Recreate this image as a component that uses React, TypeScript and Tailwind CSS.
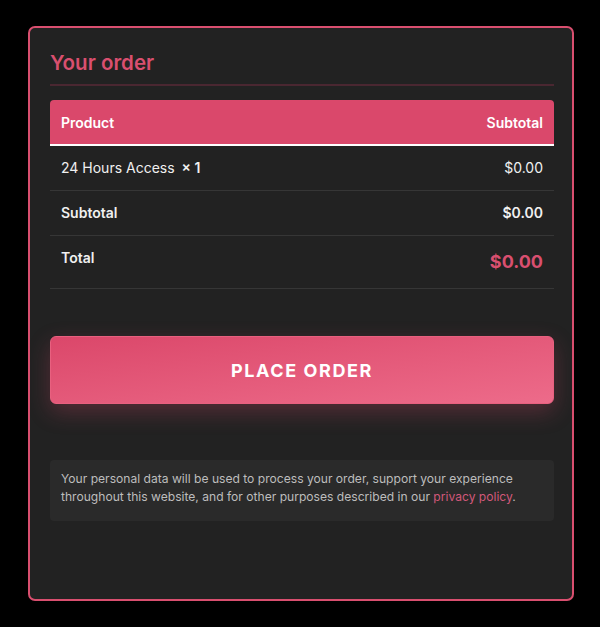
import React from "react";

const rows = [
  { label: "24 Hours Access", qty: "× 1", value: "$0.00" },
];

export default function App() {
  return (
    <div className="min-h-[627px] bg-black pt-[26px] pl-[28px] font-['Inter',sans-serif]">
      <div className="w-[546px] h-[575px] rounded-[7px] border-2 border-[#d94f6f] bg-[#222222] pl-5 pr-[18px] pt-5">
        {/* Titre */}
        <h3 className="text-[20.5px] leading-[29px] font-semibold text-[#d94f6f] pb-[7px] border-b-2 border-[#4a2731]">
          Your order
        </h3>

        {/* Bảng đơn hàng */}
        <div className="mt-[14px]">
          <div className="flex justify-between items-center h-[46px] px-[11px] rounded-t-[4px] bg-[#da486b] border-b-2 border-white text-[14px] font-semibold text-white">
            <span>Product</span>
            <span>Subtotal</span>
          </div>
          {rows.map((r) => (
            <div
              key={r.label}
              className="flex justify-between items-center py-3 px-[11px] border-b border-[#363636] text-[14px] leading-5 text-[#f0f0f0]"
            >
              <span>
                {r.label}
                <span className="font-semibold ml-[7px]">{r.qty}</span>
              </span>
              <span>{r.value}</span>
            </div>
          ))}
          <div className="flex justify-between items-center py-3 px-[11px] border-b border-[#363636] text-[14px] leading-5 font-semibold text-[#f0f0f0]">
            <span>Subtotal</span>
            <span>$0.00</span>
          </div>
          <div className="flex justify-between items-start py-3 px-[11px] border-b border-[#363636] text-[#f0f0f0]">
            <span className="text-[14px] leading-5 font-semibold">Total</span>
            <span className="text-[18px] leading-7 font-bold text-[#d94f6f]">$0.00</span>
          </div>
        </div>

        {/* Nút đặt hàng */}
        <button className="mt-[47px] w-full h-[68px] rounded-[6px] border border-[#e8607f] bg-gradient-to-br from-[#db476a] to-[#ed6b8a] text-white text-[18px] font-bold tracking-[1.6px] shadow-[0_8px_22px_rgba(219,71,106,0.28)]">
          PLACE ORDER
        </button>

        {/* Ghi chú bảo mật */}
        <p className="mt-[56px] rounded-[4px] bg-[#2a2a2a] px-[11px] pt-[10px] pb-[15px] text-[12.1px] leading-[18px] text-[#bdbdbd]">
          Your personal data will be used to process your order, support your experience throughout this website, and for other purposes described in our <span className="text-[#d2587a]">privacy policy</span>.
        </p>
      </div>
    </div>
  );
}
